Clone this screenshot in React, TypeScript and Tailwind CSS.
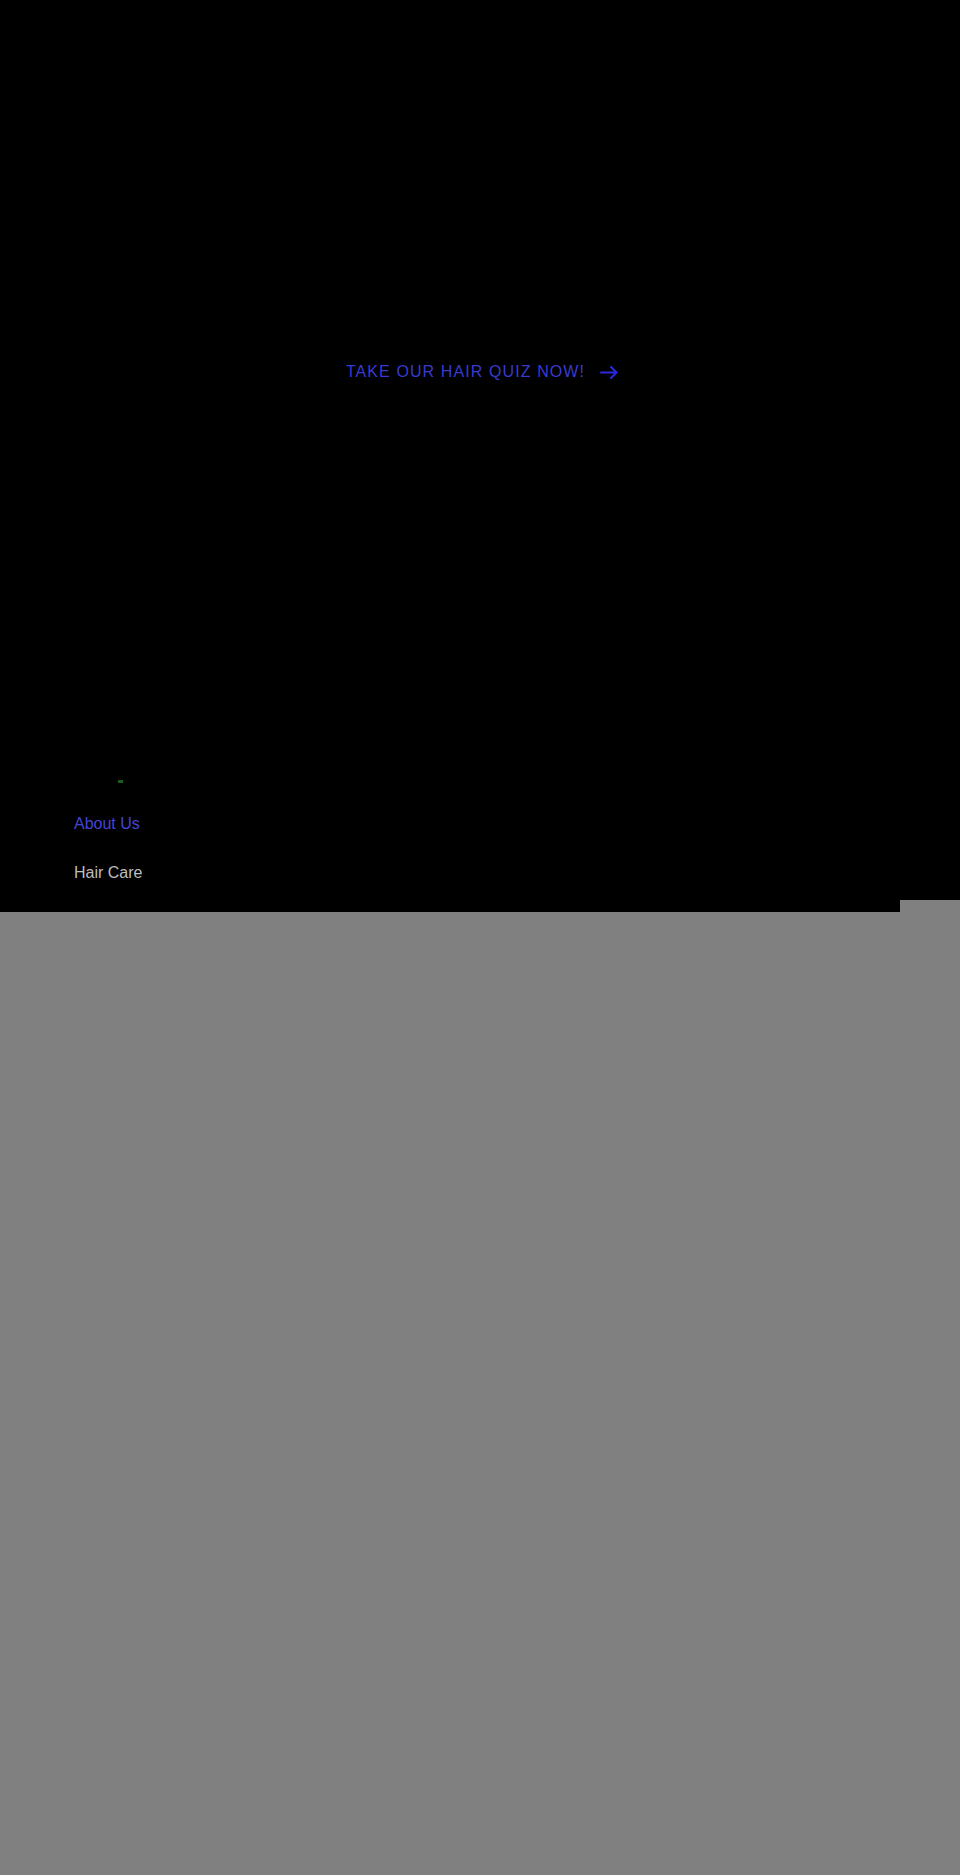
export default function App() {
  return (
    <div className="min-h-[1875px] flex flex-col bg-[#808080]" style={{ fontFamily: '"Liberation Sans", Arial, sans-serif' }}>
      {/* Hero */}
      <div className="h-[912px] bg-black flex flex-col">
        <div className="pt-[360px] flex justify-center">
          <a href="#" className="ml-[4px] flex items-center gap-[15px] text-[16px] leading-6 tracking-[1.1px] text-[#3a3ad0] uppercase">
            TAKE OUR HAIR QUIZ NOW!
            <svg width="18" height="13" viewBox="0 0 18 13" fill="none" stroke="#2a2ae0" strokeWidth="2" strokeLinecap="round" strokeLinejoin="round">
              <path d="M1 6.5h15.5" />
              <path d="M11 1l5.5 5.5L11 12" />
            </svg>
          </a>
        </div>

        {/* Menu */}
        <div className="mt-[396px] pl-[74px] flex flex-col">
          <div className="ml-[44px] h-[3px] w-[5px] bg-[#1f5a1f]" />
          <a href="#" className="mt-[29px] text-[16px] leading-6 text-[#4444d8]">About Us</a>
          <a href="#" className="mt-[25px] text-[16px] leading-6 text-[#bdbdbd]">Hair Care</a>
        </div>

        <div className="mt-auto flex justify-end">
          <div className="h-[12px] w-[60px] bg-[#808080]" />
        </div>
      </div>

      {/* Lower section */}
      <div className="flex-1 bg-[#808080]" />
    </div>
  )
}
